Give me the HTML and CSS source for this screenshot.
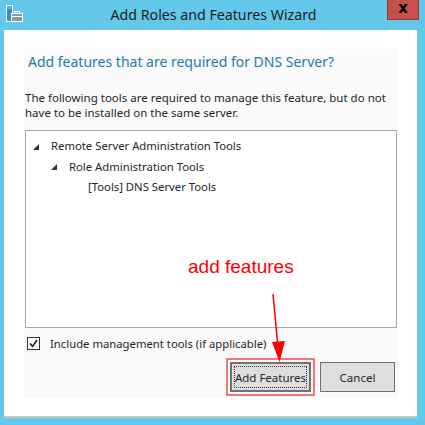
FILE: index.html
```html
<!DOCTYPE html>
<html>
<head>
<meta charset="utf-8">
<link rel="stylesheet" href="styles.css">
</head>
<body>
<div class="titlebar">
  <svg class="appicon" width="18" height="18" viewBox="0 0 18 18">
    <rect x="1.5" y="0.5" width="6" height="16" fill="#2f8fd0" stroke="#fff" stroke-width="1"/>
    <rect x="2" y="1" width="5" height="3" fill="#5ab4ec"/>
    <rect x="6.5" y="8.5" width="11" height="8" fill="#8a98a4" stroke="#fff" stroke-width="1"/>
    <rect x="9.5" y="6.5" width="5" height="2" fill="none" stroke="#fff" stroke-width="1"/>
    <line x1="7" y1="11.5" x2="17" y2="11.5" stroke="#fff" stroke-width="1"/>
  </svg>
  <div class="title">Add Roles and Features Wizard</div>
  <div class="close">x</div>
</div>
<div class="window">
  <div class="panel">
    <h1 class="heading">Add features that are required for DNS Server?</h1>
    <p class="desc">The following tools are required to manage this feature, but do not have to be installed on the same server.</p>
    <div class="tree">
      <div class="node lvl0"><span class="tri"></span>Remote Server Administration Tools</div>
      <div class="node lvl1"><span class="tri"></span>Role Administration Tools</div>
      <div class="node lvl2">[Tools] DNS Server Tools</div>
    </div>
    <div class="check-row">
      <span class="checkbox">
        <svg width="9" height="9" viewBox="0 0 9 9"><path d="M1 4.5 L3.5 7.5 L8 1" fill="none" stroke="#222" stroke-width="1.6"/></svg>
      </span>
      <span class="check-label">Include management tools (if applicable)</span>
    </div>
    <div class="buttons">
      <button class="btn btn-default">Add Features</button>
      <button class="btn">Cancel</button>
    </div>
  </div>
</div>
<div class="annotation">add features</div>
<svg class="arrow" width="30" height="80" viewBox="0 0 30 80">
  <line x1="10" y1="2" x2="15" y2="56" stroke="#ff0000" stroke-width="1.5"/>
  <polygon points="9,50 22,49 16.5,70" fill="#ff0000"/>
</svg>
</body>
</html>
```

FILE: styles.css
```css
html, body {
  margin: 0;
  padding: 0;
}
body {
  width: 425px;
  height: 425px;
  background: #63c8e9;
  font-family: "Noto Sans", "Open Sans", sans-serif;
  position: relative;
  overflow: hidden;
}
.titlebar {
  height: 30px;
  display: flex;
  align-items: center;
  position: relative;
}
.appicon {
  position: absolute;
  left: 5px;
  top: 5px;
}
.title {
  flex: 1;
  text-align: center;
  font-size: 14.2px;
  color: #1c1c1c;
  margin-left: 2px;
  margin-bottom: 1px;
}
.close {
  position: absolute;
  right: 6px;
  top: 0;
  width: 32px;
  height: 20px;
  background: #c7514a;
  border: 1px solid #8f3a36;
  border-top: none;
  box-sizing: border-box;
  color: #000;
  font-weight: bold;
  font-size: 15px;
  line-height: 16px;
  text-align: center;
  font-family: "DejaVu Sans", sans-serif;
}
.window {
  margin-left: 4px;
  width: 413px;
  height: 388px;
  background: #fff;
  border-bottom: 2px solid #c6c6c6;
  padding-top: 19px;
  box-sizing: border-box;
}
.panel {
  margin-left: 20px;
  width: 374px;
  height: 349px;
  background: #fafafa;
  box-sizing: border-box;
  padding: 0 1px 0 1px;
  display: flex;
  flex-direction: column;
}
.heading {
  margin: 0;
  padding: 3px 0 0 3px;
  font-weight: normal;
  font-size: 14px;
  line-height: 19px;
  color: #1f7ba8;
}
.desc {
  margin: 20px 0 0 0;
  font-size: 11.5px;
  line-height: 14.5px;
  color: #262626;
  padding-right: 8px;
}
.tree {
  margin-top: 10px;
  height: 198px;
  border: 1px solid #a8a8a8;
  background: #fff;
  box-sizing: border-box;
  padding-top: 5px;
}
.node {
  font-size: 11.3px;
  line-height: 20.5px;
  color: #262626;
  display: flex;
  align-items: center;
}
.lvl0 { padding-left: 7px; }
.lvl1 { padding-left: 25px; }
.lvl2 { padding-left: 62px; }
.tri {
  width: 0;
  height: 0;
  border-left: 6px solid transparent;
  border-bottom: 6px solid #333;
  margin-right: 12px;
  margin-top: 1px;
}
.check-row {
  display: flex;
  align-items: center;
  margin-top: 8px;
  padding-left: 2px;
}
.checkbox {
  width: 13px;
  height: 13px;
  border: 1px solid #333;
  box-sizing: border-box;
  background: #fff;
  display: flex;
  align-items: center;
  justify-content: center;
}
.check-label {
  margin-left: 10px;
  font-size: 11.3px;
  color: #262626;
}
.buttons {
  display: flex;
  justify-content: flex-end;
  gap: 9px;
  margin-top: 11px;
  padding-right: 2px;
}
.btn {
  height: 30px;
  border: 1px solid #707070;
  background: #dedede;
  font-family: "Noto Sans", "Open Sans", sans-serif;
  font-size: 11.5px;
  color: #262626;
  padding: 0;
  width: 75px;
  position: relative;
}
.btn-default {
  width: 81px;
  border: 2px solid #707070;
  outline: 2px solid #f37676;
  outline-offset: 2px;
}
.btn-default::after {
  content: "";
  position: absolute;
  left: 2px;
  top: 2px;
  right: 2px;
  bottom: 2px;
  border: 1px dotted #333;
}
.annotation {
  position: absolute;
  left: 188px;
  top: 256px;
  font-family: "Liberation Sans", Arial, sans-serif;
  font-size: 19px;
  color: #ff0000;
}
.arrow {
  position: absolute;
  left: 263px;
  top: 292px;
}
```
